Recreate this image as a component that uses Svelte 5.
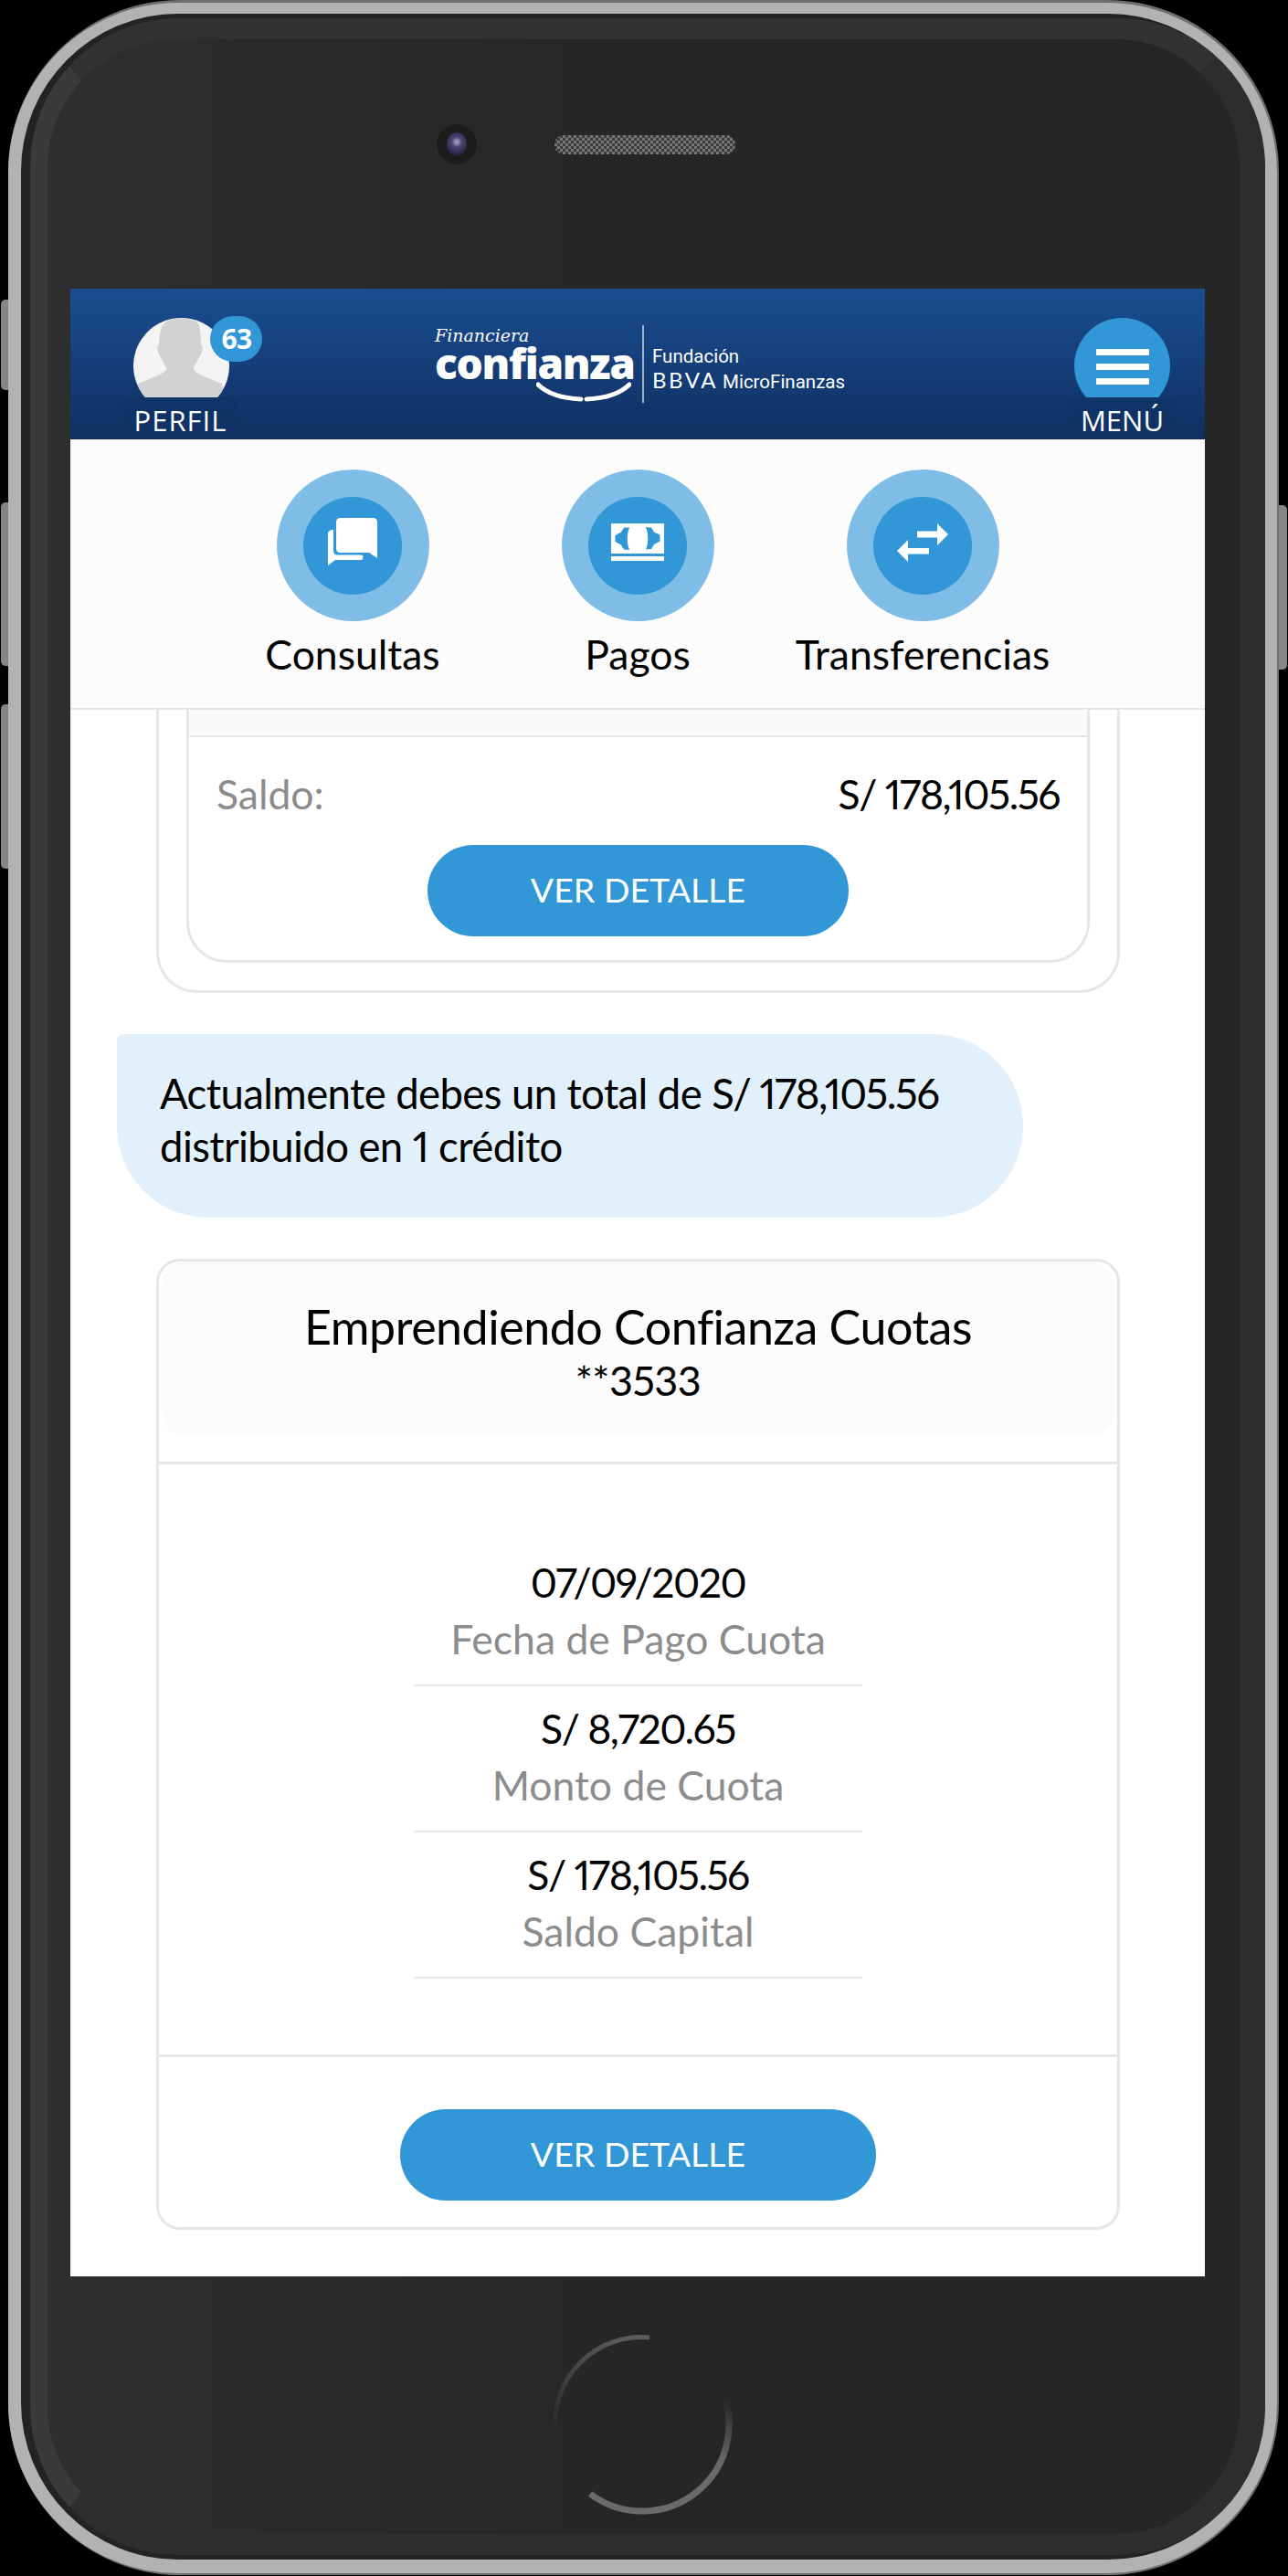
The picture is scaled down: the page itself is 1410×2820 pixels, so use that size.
<script>
  const actions = [
    { label: 'Consultas', icon: 'chat' },
    { label: 'Pagos', icon: 'cash' },
    { label: 'Transferencias', icon: 'swap' }
  ];
  const details = [
    { value: '07/09/2020', label: 'Fecha de Pago Cuota' },
    { value: 'S/ 8,720.65', label: 'Monto de Cuota' },
    { value: 'S/ 178,105.56', label: 'Saldo Capital' }
  ];
</script>

<div class="stage">
  <div class="btn-col left">
    <span class="side s1"></span>
    <span class="side s2"></span>
    <span class="side s3"></span>
  </div>

  <div class="phone">
    <div class="rim">
      <div class="band">
        <div class="face">
          <div class="top-bezel">
            <span class="camera"><span class="lens"></span></span>
            <span class="speaker"></span>
          </div>

          <div class="screen">
            <header class="app-header">
              <div class="head-item perfil">
                <div class="dome avatar">
                  <svg viewBox="0 0 105 87" width="105" height="87">
                    <path fill="#d2d2d2" d="M34 6c5-7 32-7 37 0 2 3 3 14 3 24 2 0 2 4 1 7-1 4-3 6-4 8-2 5-6 9-5 11 1 3 7 6 14 9l17 7 3 15H4l1-15 17-7c7-3 13-6 14-9 1-2-3-6-5-11-1-2-3-4-4-8-1-3-1-7 1-7 0-10 2-21 6-24z"/>
                  </svg>
                </div>
                <span class="badge">63</span>
                <span class="head-label wide-label">PERFIL</span>
              </div>

              <div class="logo">
                <div class="logo-left">
                  <span class="script">Financiera</span>
                  <span class="brand">confianza</span>
                  <svg class="smile" viewBox="0 0 104 22" width="104" height="22">
                    <path d="M2 3c10 10 26 15 47 16" fill="none" stroke="#fff" stroke-width="5" stroke-linecap="round"/>
                    <path d="M55 19c21-1 37-6 47-16" fill="none" stroke="#fff" stroke-width="5" stroke-linecap="round"/>
                  </svg>
                </div>
                <span class="logo-sep"></span>
                <div class="logo-right">
                  <span class="fund">Fundación</span>
                  <span class="micro"><b>BBVA</b> MicroFinanzas</span>
                </div>
              </div>

              <div class="head-item menu">
                <div class="dome burger">
                  <span></span><span></span><span></span>
                </div>
                <span class="head-label">MENÚ</span>
              </div>
            </header>

            <nav class="actions">
              {#each actions as a}
                <div class="action">
                  <div class="ring">
                    <div class="core">
                      {#if a.icon === 'chat'}
                        <svg class="ic-chat" viewBox="0 0 54 52" width="54" height="52">
                          <path fill="#fff" d="M13 0h37c2 0 4 2 4 4v40l-9-6H13c-2 0-4-2-4-4V4c0-2 2-4 4-4z"/>
                          <path fill="#fff" d="M0 17c0-2 2-4 6-4v23c0 3 2 4.500 4 4.500h27c2 0 2 5.500-.5 5.500H8l-8 6z"/>
                        </svg>
                      {:else if a.icon === 'cash'}
                        <svg class="ic-cash" viewBox="0 0 58 41" width="58" height="41">
                          <path fill="#fff" fill-rule="evenodd" d="M0 0h58v33H0zM14 4.500l-3 5-6.500 3.500v7l6.500 3.500 3 5 6 .5c-3-7-3-17 0-24.500zM44 4.500l-6-.5c3 7.500 3 17.500 0 24.500l6-.5 3-5 6.500-3.500v-7L47 9.500z"/>
                          <rect y="36" width="58" height="5" fill="#fff"/>
                        </svg>
                      {:else}
                        <svg class="ic-swap" viewBox="0 0 56 42" width="56" height="42">
                          <path fill="#fff" d="M22 8.500h22V0l12 12-12 12v-8.500H22z"/>
                          <path fill="#fff" d="M35 27H12v-9L0 30l12 12v-8.500h23z"/>
                        </svg>
                      {/if}
                    </div>
                  </div>
                  <span class="action-label">{a.label}</span>
                </div>
              {/each}
            </nav>

            <main class="content">
              <section class="card cut">
                <div class="inner">
                  <div class="inner-head"></div>
                  <div class="saldo">
                    <span class="muted">Saldo:</span>
                    <span class="amount">S/ 178,105.56</span>
                  </div>
                  <button class="pill small">VER DETALLE</button>
                </div>
              </section>

              <p class="bubble">Actualmente debes un total de <span class="amount">S/ 178,105.56</span><br />distribuido en 1 crédito</p>

              <section class="card full">
                <div class="card-head">
                  <div class="title">Emprendiendo Confianza Cuotas</div>
                  <div class="num">**3533</div>
                </div>
                <div class="card-body">
                  {#each details as d}
                    <div class="detail">
                      <div class="amount">{d.value}</div>
                      <div class="muted">{d.label}</div>
                    </div>
                  {/each}
                </div>
                <div class="card-foot">
                  <button class="pill wide">VER DETALLE</button>
                </div>
              </section>
            </main>
          </div>

          <div class="bottom-bezel">
            <svg viewBox="0 0 200 200" width="200" height="200">
              <defs>
                <linearGradient id="homeA" x1="0" y1="1" x2="0.7" y2="0">
                  <stop offset="0" stop-color="#5c5c5c" stop-opacity="0" />
                  <stop offset="1" stop-color="#5c5c5c" />
                </linearGradient>
                <linearGradient id="homeB" x1="0.7" y1="0" x2="0.3" y2="1">
                  <stop offset="0" stop-color="#707070" stop-opacity="0" />
                  <stop offset="0.45" stop-color="#6a6a6a" />
                  <stop offset="1" stop-color="#6a6a6a" />
                </linearGradient>
              </defs>
              <path d="M5 110A95 95 0 0 1 108 5" fill="none" stroke="url(#homeA)" stroke-width="5" />
              <path d="M185 57.500A95 95 0 0 1 43 176" fill="none" stroke="url(#homeB)" stroke-width="7" />
            </svg>
          </div>
        </div>
      </div>
    </div>
  </div>

  <div class="btn-col right">
    <span class="side s4"></span>
  </div>
</div>

<style>
  :global(body) {
    margin: 0;
    background: #000;
  }

  .stage {
    width: 1410px;
    height: 2820px;
    background: #000;
    display: flex;
    font-family: Lato, "Open Sans", sans-serif;
    font-variant-numeric: proportional-nums;
    overflow: hidden;
  }

  .btn-col {
    width: 9px;
    display: flex;
    flex-direction: column;
    flex-shrink: 0;
  }

  .right {
    width: 10px;
  }

  .side {
    display: block;
    background: #85858a;
  }

  .left .side {
    margin-left: 1px;
    border-radius: 5px 0 0 5px;
  }

  .right .side {
    margin-right: 1px;
    border-radius: 0 5px 5px 0;
  }

  .s1 { margin-top: 328px; height: 99px; }
  .s2 { margin-top: 123px; height: 179px; }
  .s3 { margin-top: 42px; height: 180px; }
  .s4 { margin-top: 553px; height: 180px; }

  .phone {
    flex: 1;
    height: 2819px;
    box-sizing: border-box;
    padding: 3px 2px 2px 0;
    background: #6e6e6e;
    border-radius: 188px;
  }

  .rim {
    height: 100%;
    box-sizing: border-box;
    padding: 12px 13px 15px 14px;
    background: #b2b2b2;
    border-radius: 186px;
  }

  .band {
    height: 100%;
    box-sizing: border-box;
    padding: 5px 0 5px 10px;
    background: #232323;
    border-radius: 172px;
  }

  .face {
    height: 100%;
    box-sizing: border-box;
    border-radius: 162px;
    border: solid #303030;
    border-width: 23px 28px 23px 19px;
    border-color: #323232 #2d2d2d #2e2e2e #3a3a3a;
    background: linear-gradient(90deg, #2e2e2e, #262626 50%);
    display: flex;
    flex-direction: column;
    align-items: flex-start;
  }

  .top-bezel {
    height: 273px;
    width: 100%;
    display: flex;
    align-items: center;
    flex-shrink: 0;
    box-sizing: border-box;
  }

  .camera {
    width: 44px;
    height: 44px;
    border-radius: 50%;
    background: #1c1c1c;
    display: flex;
    align-items: center;
    justify-content: center;
    margin-left: 426px;
    margin-top: -43px;
  }

  .lens {
    width: 22px;
    height: 26px;
    border-radius: 50%;
    background: radial-gradient(circle at 50% 40%, #9a94b4 0 8%, #4a4270 30%, #2b2548 70%, #14122a);
  }

  .speaker {
    width: 198px;
    height: 21px;
    margin-left: 85px;
    margin-top: -43px;
    border-radius: 10px;
    background-color: #3a3a3a;
    background-image:
      linear-gradient(45deg, #777 25%, transparent 25%, transparent 75%, #777 75%),
      linear-gradient(45deg, #777 25%, transparent 25%, transparent 75%, #777 75%);
    background-size: 6px 6px;
    background-position: 0 0, 3px 3px;
  }

  .screen {
    width: 1242px;
    height: 2176px;
    margin-left: 25px;
    flex-shrink: 0;
    background: #fff;
    display: flex;
    flex-direction: column;
    overflow: hidden;
  }

  .app-header {
    height: 165px;
    flex-shrink: 0;
    background: linear-gradient(#1a4e91, #0f2f60);
    display: flex;
    color: #fff;
    box-sizing: border-box;
    padding: 0 38px 0 69px;
    font-family: "Open Sans", sans-serif;
  }

  .head-item {
    width: 105px;
    position: relative;
    padding-top: 32px;
    display: flex;
    flex-direction: column;
    align-items: center;
  }

  .menu {
    margin-left: auto;
  }

  .dome {
    width: 105px;
    height: 87px;
    clip-path: circle(52.5px at 50% 52.5px);
    flex-shrink: 0;
  }

  .avatar {
    background: #f4f4f4;
  }

  .avatar svg {
    display: block;
  }

  .burger {
    background: #3197d6;
    display: flex;
    flex-direction: column;
    align-items: center;
    gap: 9px;
    padding-top: 34px;
    box-sizing: border-box;
  }

  .burger span {
    width: 58px;
    height: 7px;
    background: #fff;
  }

  .badge {
    position: absolute;
    left: 84px;
    top: 30px;
    width: 57px;
    height: 50px;
    border-radius: 25px;
    background: #3197d6;
    font-size: 30px;
    font-weight: 700;
    line-height: 50px;
    text-align: center;
    letter-spacing: -1px;
  }

  .head-label {
    font-size: 31px;
    line-height: 42px;
    padding: 4px 13px 0;
    white-space: nowrap;
    background: rgba(16, 50, 100, 0.5);
  }

  .wide-label {
    letter-spacing: 1px;
    margin-left: -2px;
  }

  .logo {
    display: flex;
    align-items: flex-start;
    height: 85px;
    margin-top: 40px;
    margin-left: 225px;
  }

  .logo-left {
    display: flex;
    flex-direction: column;
    width: 215px;
    height: 85px;
    margin-top: 3px;
  }

  .script {
    font-family: "DejaVu Serif", serif;
    font-style: italic;
    font-size: 19px;
    line-height: 17px;
  }

  .brand {
    font-size: 46px;
    font-weight: 800;
    line-height: 42px;
    letter-spacing: -1.3px;
    font-family: "Open Sans", sans-serif;
  }

  .smile {
    align-self: flex-end;
    flex-shrink: 0;
  }

  .logo-sep {
    width: 2px;
    height: 85px;
    background: rgba(255, 255, 255, 0.6);
    margin: 0 9px 0 12px;
    flex-shrink: 0;
  }

  .logo-right {
    display: flex;
    flex-direction: column;
    font-family: Roboto, sans-serif;
    font-size: 20.5px;
    line-height: 25px;
    white-space: nowrap;
    padding-top: 22px;
  }

  .micro b {
    font-family: Lato, sans-serif;
    font-weight: 400;
    font-size: 24px;
    letter-spacing: 2.5px;
  }

  .actions {
    height: 296px;
    flex-shrink: 0;
    box-sizing: border-box;
    padding-top: 33px;
    background: #fcfcfc;
    border-bottom: 2px solid #e6e6e6;
    display: flex;
    justify-content: center;
  }

  .action {
    width: 312px;
    display: flex;
    flex-direction: column;
    align-items: center;
  }

  .ring {
    width: 167px;
    height: 166px;
    border-radius: 50%;
    background: #7fbde6;
    display: flex;
    align-items: center;
    justify-content: center;
  }

  .core {
    width: 108px;
    height: 107px;
    border-radius: 50%;
    background: #3197d6;
    display: flex;
    align-items: center;
    justify-content: center;
  }

  .ic-chat { margin-bottom: 8px; }
  .ic-cash { margin-bottom: 7px; }
  .ic-swap { margin-bottom: 6px; }

  .action-label {
    margin-top: 7px;
    font-size: 44.5px;
    line-height: 58px;
    color: #000;
    white-space: nowrap;
  }

  .content {
    flex: 1;
    display: flex;
    flex-direction: column;
    color: #000;
    min-height: 0;
  }

  .card {
    box-sizing: border-box;
    width: 1055px;
    margin-left: 94px;
    border: 3px solid #e6e6e6;
    background: #fff;
    flex-shrink: 0;
  }

  .cut {
    height: 310px;
    border-top: 0;
    border-radius: 0 0 44px 44px;
    padding: 0 30px 30px;
  }

  .inner {
    height: 100%;
    box-sizing: border-box;
    border: 3px solid #e6e6e6;
    border-top: 0;
    border-radius: 0 0 44px 44px;
    display: flex;
    flex-direction: column;
    align-items: center;
  }

  .inner-head {
    height: 28px;
    width: 100%;
    flex-shrink: 0;
    background: #fafafa;
    border-bottom: 2px solid #e6e6e6;
  }

  .saldo {
    width: 100%;
    box-sizing: border-box;
    padding: 0 30px;
    display: flex;
    justify-content: space-between;
    font-size: 44.5px;
    line-height: 60px;
    margin-top: 32px;
  }

  .amount {
    letter-spacing: -1.5px;
  }

  .muted {
    color: #8c8c8c;
  }

  .pill {
    display: block;
    height: 100px;
    border: 0;
    border-radius: 50px;
    background: #3197d6;
    color: #fff;
    font-family: inherit;
    font-size: 37.5px;
    padding: 0 0 4px;
    flex-shrink: 0;
  }

  .small {
    width: 461px;
    margin-top: 26px;
  }

  .wide {
    width: 521px;
    margin: 0 auto;
  }

  .bubble {
    box-sizing: border-box;
    width: 992px;
    height: 201px;
    margin: 45px 0 0 51px;
    padding: 36px 0 0 47px;
    border-radius: 8px 100px 100px 100px;
    background: #e1f0fa;
    font-size: 45.5px;
    line-height: 58px;
    letter-spacing: -0.6px;
    flex-shrink: 0;
    white-space: nowrap;
  }

  .full {
    height: 1063px;
    margin-top: 45px;
    border-radius: 26px;
    display: flex;
    flex-direction: column;
    text-align: center;
  }

  .card-head {
    height: 191px;
    box-sizing: border-box;
    padding-top: 43px;
    margin: 0 3px;
    background: #fbfbfb;
    border-radius: 26px;
    flex-shrink: 0;
  }

  .title {
    font-size: 52px;
    line-height: 56px;
    letter-spacing: -0.5px;
  }

  .num {
    font-size: 45px;
    line-height: 56px;
    letter-spacing: -0.5px;
    margin-top: 3px;
  }

  .card-body {
    margin-top: 28px;
    border-top: 3px solid #e6e6e6;
    border-bottom: 3px solid #e6e6e6;
    height: 652px;
    flex-shrink: 0;
    box-sizing: border-box;
    padding-top: 83px;
    display: flex;
    flex-direction: column;
    align-items: center;
  }

  .detail {
    width: 491px;
    height: 160px;
    box-sizing: border-box;
    padding-top: 15px;
    border-bottom: 2px solid #e6e6e6;
    font-size: 44.5px;
    line-height: 62px;
    flex-shrink: 0;
  }

  .card-foot {
    padding-top: 57px;
  }

  .bottom-bezel {
    padding: 62px 0 0 551px;
  }

  .bottom-bezel svg {
    display: block;
  }
</style>
